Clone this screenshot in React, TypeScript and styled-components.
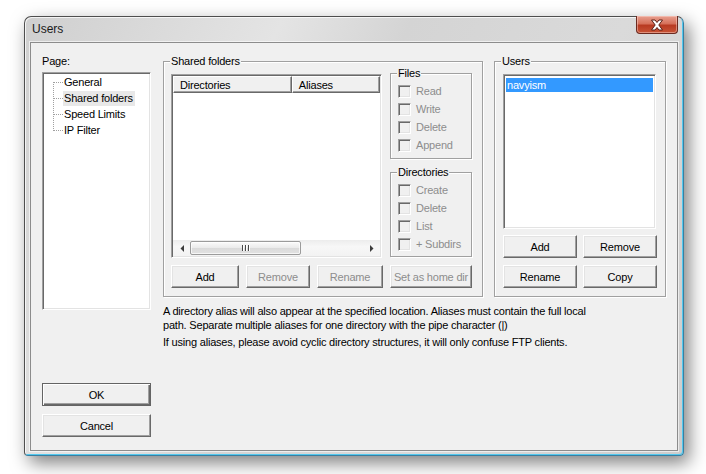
import React from 'react'
import styled, { createGlobalStyle, css } from 'styled-components'

const GlobalStyle = createGlobalStyle`
  html, body {
    margin: 0;
    padding: 0;
    background: #ffffff;
  }
  body {
    font-family: 'Liberation Sans', Arial, sans-serif;
    font-size: 11px;
    letter-spacing: -0.2px;
    color: #000;
  }
`

const sunken = css`
  border: 1px solid;
  border-color: #a0a0a0 #ffffff #ffffff #a0a0a0;
  box-shadow: inset 1px 1px 0 #696969, inset -1px -1px 0 #e3e3e3;
`

const Desktop = styled.div`
  box-sizing: border-box;
  width: 706px;
  height: 474px;
  padding: 16px 0 0 24px;
`

const Frame = styled.div`
  box-sizing: border-box;
  width: 660px;
  height: 440px;
  display: flex;
  flex-direction: column;
  padding: 0 5px 4px 5px;
  border: 1px solid #4e4e4e;
  border-right-color: #3a7fa0;
  border-bottom-color: #3a7fa0;
  border-radius: 7px 7px 4px 4px;
  background: linear-gradient(115deg, #cfcfcf 0%, #e4e4e4 30%, #d4d4d4 45%, #dadada 70%, #cdcdcd 100%);
  box-shadow: inset 1px 1px 0 rgba(255, 255, 255, 0.75), inset -1px -1px 0 #52c8ee,
    5px 7px 18px rgba(0, 0, 0, 0.5);
`

const TitleBar = styled.div`
  height: 25px;
  display: flex;
  justify-content: space-between;
  align-items: flex-start;
`

const Title = styled.span`
  padding: 5px 0 0 2px;
  font-size: 12px;
  letter-spacing: 0;
  color: #1a1a1a;
`

const CloseButton = styled.div`
  box-sizing: border-box;
  width: 42px;
  height: 18px;
  margin-top: -1px;
  display: flex;
  align-items: center;
  justify-content: center;
  border: 1px solid #6b2a20;
  border-top: none;
  border-radius: 0 0 4px 4px;
  background: linear-gradient(#e8a090 0%, #d6705a 45%, #b83a22 55%, #c85436 100%);
  box-shadow: inset 0 0 0 1px rgba(255, 220, 210, 0.45);
`

const Client = styled.div`
  box-sizing: border-box;
  flex: 1;
  display: flex;
  gap: 12px;
  padding: 12px 11px 0 11px;
  background: #f0f0f0;
  border: 1px solid #8c8c8c;
  box-shadow: 0 0 0 1px rgba(255, 255, 255, 0.6);
`

const LeftColumn = styled.div`
  width: 109px;
  display: flex;
  flex-direction: column;
`

const Label = styled.div`
  line-height: 13px;
  margin-bottom: 4px;
`

const TreeBox = styled.div`
  box-sizing: border-box;
  height: 238px;
  padding-top: 1px;
  background: #fff;
  ${sunken};
`

const TreeRow = styled.div`
  height: 16px;
  display: flex;
  align-items: center;
  padding-left: 1px;
`

const TreeText = styled.span<{ $selected?: boolean }>`
  line-height: 15px;
  padding: 0 2px 0 1px;
  background: ${p => (p.$selected ? '#e8e8e8' : 'transparent')};
`

const Button = styled.div<{ $w?: number; $disabled?: boolean; $default?: boolean }>`
  box-sizing: border-box;
  width: ${p => (p.$w ? `${p.$w}px` : '100%')};
  height: 23px;
  display: flex;
  align-items: center;
  justify-content: center;
  white-space: nowrap;
  overflow: hidden;
  background: #f0f0f0;
  color: ${p => (p.$disabled ? '#8d8d8d' : '#000')};
  border: 1px solid;
  border-color: ${p => (p.$default ? '#646464' : '#ffffff #696969 #696969 #ffffff')};
  box-shadow: ${p =>
    p.$default
      ? 'inset 1px 1px 0 #ffffff, inset -1px -1px 0 #696969, inset -2px -2px 0 #a0a0a0'
      : 'inset -1px -1px 0 #a0a0a0, inset 1px 1px 0 #e3e3e3'};
`

const OkButton = styled(Button)`
  margin-top: 73px;
`

const CancelButton = styled(Button)`
  margin-top: 8px;
`

const RightArea = styled.div`
  display: flex;
  flex-direction: column;
`

const GroupRow = styled.div`
  display: flex;
  gap: 11px;
  margin-top: 6px;
`

const Group = styled.div<{ $w: number; $h: number }>`
  position: relative;
  box-sizing: border-box;
  width: ${p => p.$w}px;
  height: ${p => p.$h}px;
  border: 1px solid #a0a0a0;
  box-shadow: inset 1px 1px 0 #ffffff, 1px 1px 0 #ffffff;
`

const Legend = styled.span`
  position: absolute;
  top: -7px;
  left: 6px;
  padding: 0 1px;
  line-height: 13px;
  background: #f0f0f0;
`

const SharedBody = styled.div`
  padding: 12px 0 0 7px;
  display: flex;
  flex-direction: column;
`

const SharedTop = styled.div`
  display: flex;
  gap: 8px;
`

const ListView = styled.div`
  box-sizing: border-box;
  width: 211px;
  height: 184px;
  display: flex;
  flex-direction: column;
  background: #fff;
  ${sunken};
  padding: 1px;
`

const Header = styled.div`
  display: flex;
  height: 17px;
`

const HeaderCell = styled.div<{ $w: number }>`
  box-sizing: border-box;
  width: ${p => p.$w}px;
  display: flex;
  align-items: center;
  padding-left: 6px;
  background: #f0f0f0;
  border: 1px solid;
  border-color: #ffffff #696969 #696969 #ffffff;
  box-shadow: inset -1px -1px 0 #a0a0a0;
`

const ListSpace = styled.div`
  flex: 1;
`

const HScroll = styled.div`
  height: 16px;
  display: flex;
  align-items: center;
  background: linear-gradient(#ececec, #f7f7f7 40%, #f3f3f3);
`

const ScrollArrow = styled.div`
  width: 17px;
  height: 16px;
  display: flex;
  align-items: center;
  justify-content: center;
`

const Thumb = styled.div`
  box-sizing: border-box;
  width: 111px;
  height: 14px;
  display: flex;
  align-items: center;
  justify-content: center;
  gap: 2px;
  border: 1px solid #9b9b9b;
  border-radius: 2px;
  background: linear-gradient(#fbfbfb, #eaeaea 50%, #dadada 51%, #e2e2e2);
  box-shadow: inset 0 0 0 1px rgba(255, 255, 255, 0.7);
`

const Grip = styled.span`
  width: 1px;
  height: 6px;
  background: #4a4a4a;
  box-shadow: 1px 0 0 #ffffff;
`

const SideColumn = styled.div`
  display: flex;
  flex-direction: column;
  gap: 13px;
  margin-top: -1px;
`

const CheckList = styled.div`
  padding: 11px 0 0 7px;
  display: flex;
  flex-direction: column;
`

const CheckRow = styled.div`
  height: 18px;
  display: flex;
  align-items: flex-start;
  gap: 5px;
  color: #8d8d8d;
  line-height: 13px;
`

const CheckBox = styled.span`
  box-sizing: border-box;
  width: 13px;
  height: 13px;
  background: #f0f0f0;
  ${sunken};
`

const ButtonRow = styled.div<{ $gap: number }>`
  display: flex;
  gap: ${p => p.$gap}px;
  margin-top: 7px;
`

const UsersBody = styled.div`
  padding: 12px 0 0 8px;
  display: flex;
  flex-direction: column;
`

const ListBox = styled.div`
  box-sizing: border-box;
  width: 153px;
  height: 155px;
  padding: 3px 2px 0 2px;
  background: #fff;
  ${sunken};
`

const ListItem = styled.div<{ $selected?: boolean }>`
  height: 14px;
  line-height: 14px;
  padding-left: 1px;
  background: ${p => (p.$selected ? '#3399ff' : 'transparent')};
  color: ${p => (p.$selected ? '#ffffff' : '#000')};
`

const UserButtons = styled.div`
  display: grid;
  grid-template-columns: 74px 74px;
  column-gap: 6px;
  row-gap: 7px;
  margin-top: 6px;
`

const Notes = styled.div`
  margin-top: 7px;
  display: flex;
  flex-direction: column;
  gap: 3px;
`

const Note = styled.p`
  margin: 0;
  line-height: 14px;
  white-space: nowrap;
`

const TreeLine = ({ first, last }: { first?: boolean; last?: boolean }) => (
  <svg width="19" height="16" viewBox="0 0 19 16">
    <line
      x1="9.5"
      y1={first ? 8 : 0}
      x2="9.5"
      y2={last ? 9 : 16}
      stroke="#a0a0a0"
      strokeDasharray="1 1"
    />
    <line x1="10" y1="8.5" x2="19" y2="8.5" stroke="#a0a0a0" strokeDasharray="1 1" />
  </svg>
)

const Arrow = ({ dir }: { dir: 'left' | 'right' }) => (
  <svg width="4" height="7" viewBox="0 0 4 7">
    <path d={dir === 'left' ? 'M4 0 L0.5 3.5 L4 7 Z' : 'M0 0 L3.5 3.5 L0 7 Z'} fill="#3c3c3c" />
  </svg>
)

const CloseGlyph = () => (
  <svg width="14" height="12" viewBox="0 0 14 12">
    <path
      d="M1.5 1 H5 L7 3.5 L9 1 H12.5 L8.8 6 L12.5 11 H9 L7 8.5 L5 11 H1.5 L5.2 6 Z"
      fill="#ffffff"
      stroke="#5a2016"
      strokeWidth="1"
      strokeLinejoin="round"
    />
  </svg>
)

const pages = ['General', 'Shared folders', 'Speed Limits', 'IP Filter']

const App: React.FunctionComponent = () => {
  return (
    <>
      <GlobalStyle />
      <Desktop>
        <Frame>
          <TitleBar>
            <Title>Users</Title>
            <CloseButton>
              <CloseGlyph />
            </CloseButton>
          </TitleBar>
          <Client>
            <LeftColumn>
              <Label>Page:</Label>
              <TreeBox>
                {pages.map((page, i) => (
                  <TreeRow key={page}>
                    <TreeLine first={i === 0} last={i === pages.length - 1} />
                    <TreeText $selected={page === 'Shared folders'}>{page}</TreeText>
                  </TreeRow>
                ))}
              </TreeBox>
              <OkButton $default>OK</OkButton>
              <CancelButton>Cancel</CancelButton>
            </LeftColumn>

            <RightArea>
              <GroupRow>
                <Group $w={320} $h={236}>
                  <Legend>Shared folders</Legend>
                  <SharedBody>
                    <SharedTop>
                      <ListView>
                        <Header>
                          <HeaderCell $w={120}>Directories</HeaderCell>
                          <HeaderCell $w={89}>Aliases</HeaderCell>
                        </Header>
                        <ListSpace />
                        <HScroll>
                          <ScrollArrow>
                            <Arrow dir="left" />
                          </ScrollArrow>
                          <Thumb>
                            <Grip />
                            <Grip />
                            <Grip />
                          </Thumb>
                          <ListSpace />
                          <ScrollArrow>
                            <Arrow dir="right" />
                          </ScrollArrow>
                        </HScroll>
                      </ListView>
                      <SideColumn>
                        <Group $w={82} $h={86}>
                          <Legend>Files</Legend>
                          <CheckList>
                            {['Read', 'Write', 'Delete', 'Append'].map(t => (
                              <CheckRow key={t}>
                                <CheckBox />
                                {t}
                              </CheckRow>
                            ))}
                          </CheckList>
                        </Group>
                        <Group $w={82} $h={85}>
                          <Legend>Directories</Legend>
                          <CheckList>
                            {['Create', 'Delete', 'List', '+ Subdirs'].map(t => (
                              <CheckRow key={t}>
                                <CheckBox />
                                {t}
                              </CheckRow>
                            ))}
                          </CheckList>
                        </Group>
                      </SideColumn>
                    </SharedTop>
                    <ButtonRow $gap={7}>
                      <Button $w={68}>Add</Button>
                      <Button $w={64} $disabled>
                        Remove
                      </Button>
                      <Button $w={66} $disabled>
                        Rename
                      </Button>
                      <Button $w={82} $disabled>
                        Set as home dir
                      </Button>
                    </ButtonRow>
                  </SharedBody>
                </Group>

                <Group $w={172} $h={236}>
                  <Legend>Users</Legend>
                  <UsersBody>
                    <ListBox>
                      <ListItem $selected>navyism</ListItem>
                    </ListBox>
                    <UserButtons>
                      <Button>Add</Button>
                      <Button>Remove</Button>
                      <Button>Rename</Button>
                      <Button>Copy</Button>
                    </UserButtons>
                  </UsersBody>
                </Group>
              </GroupRow>

              <Notes>
                <Note>
                  A directory alias will also appear at the specified location. Aliases must
                  contain the full local
                  <br />
                  path. Separate multiple aliases for one directory with the pipe character (|)
                </Note>
                <Note>
                  If using aliases, please avoid cyclic directory structures, it will only confuse
                  FTP clients.
                </Note>
              </Notes>
            </RightArea>
          </Client>
        </Frame>
      </Desktop>
    </>
  )
}

export default App
